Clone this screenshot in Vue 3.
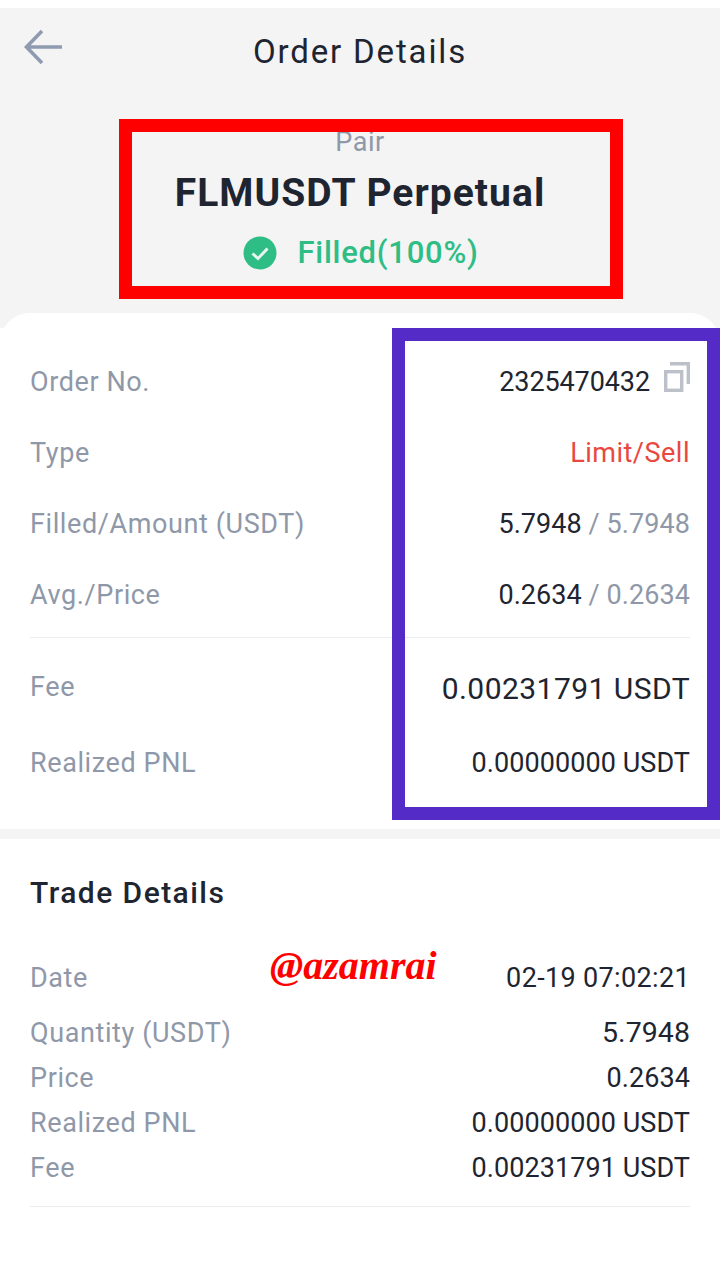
<script setup>
const orderRows = [
  { label: 'Type', value: 'Limit/Sell', cls: 'sell' },
  { label: 'Filled/Amount (USDT)', value: '5.7948', sub: '5.7948' },
  { label: 'Avg./Price', value: '0.2634', sub: '0.2634' }
]
const tradeRows = [
  { label: 'Quantity (USDT)', value: '5.7948', cls: 'mid' },
  { label: 'Price', value: '0.2634' },
  { label: 'Realized PNL', value: '0.00000000 USDT' },
  { label: 'Fee', value: '0.00231791 USDT' }
]
</script>

<template>
  <div class="page">
    <header class="top">
      <div class="nav">
        <svg class="back" width="41" height="36" viewBox="0 0 41 36" fill="none">
          <path d="M39 18H4M19 2 3.500 18 19 34" stroke="#8f9bb0" stroke-width="3.600" />
        </svg>
        <h1 class="title">Order Details</h1>
      </div>
      <div class="pair-block">
        <div class="pair-label">Pair</div>
        <div class="pair-name">FLMUSDT Perpetual</div>
        <div class="status">
          <svg width="34" height="34" viewBox="0 0 34 34">
            <circle cx="17" cy="17" r="16.500" fill="#2ebd85" />
            <path d="M9.500 17.500 15 22.500 24.500 12.500" fill="none" stroke="#e6f6ef" stroke-width="3" />
          </svg>
          <span>Filled(100%)</span>
        </div>
      </div>
      <div class="box-red"></div>
    </header>

    <section class="card">
      <div class="row">
        <span class="label">Order No.</span>
        <span class="value order-no"><span>2325470432</span><svg class="copy" width="26" height="30" viewBox="0 0 26 30" fill="none">
            <path d="M6 1.700H24.300V22" stroke="#bcc0c8" stroke-width="3.400" />
            <rect x="1.700" y="9.700" width="16" height="18.600" stroke="#bcc0c8" stroke-width="3.400" />
          </svg></span>
      </div>
      <div v-for="r in orderRows" :key="r.label" class="row">
        <span class="label">{{ r.label }}</span>
        <span class="value" :class="r.cls">{{ r.value }}<span v-if="r.sub" class="sub"> / {{ r.sub }}</span></span>
      </div>
      <div class="divider"></div>
      <div class="row fee">
        <span class="label">Fee</span>
        <span class="value big">0.00231791 USDT</span>
      </div>
      <div class="row pnl">
        <span class="label">Realized PNL</span>
        <span class="value">0.00000000 USDT</span>
      </div>
      <div class="box-purple"></div>
    </section>

    <div class="gap"></div>

    <section class="trade">
      <h2 class="trade-title">Trade Details</h2>
      <div class="trade-row date">
        <span class="label">Date</span>
        <span class="value date-value">02-19 07:02:21</span>
        <span class="mark">@azamrai</span>
      </div>
      <div v-for="r in tradeRows" :key="r.label" class="trade-row">
        <span class="label">{{ r.label }}</span>
        <span class="value" :class="r.cls">{{ r.value }}</span>
      </div>
      <div class="divider end"></div>
    </section>
  </div>
</template>

<style scoped>
.page {
  width: 720px;
  height: 1280px;
  overflow: hidden;
  padding-top: 8px;
  box-sizing: border-box;
  background: #fff;
  font-family: Roboto, "Noto Sans", sans-serif;
  color: #1e2530;
}
.top {
  position: relative;
  height: 320px;
  background: #f4f4f4;
}
.nav {
  position: relative;
  height: 87px;
  display: flex;
  justify-content: center;
  align-items: center;
}
.back {
  position: absolute;
  left: 23px;
  top: 21px;
}
.title {
  margin: 0;
  font-size: 33px;
  font-weight: 400;
  letter-spacing: 1.85px;
}
.pair-block {
  margin-top: 31px;
  display: flex;
  flex-direction: column;
  align-items: center;
}
.pair-label {
  font-size: 27px;
  line-height: 32px;
  color: #8f98a8;
  letter-spacing: 0.5px;
}
.pair-name {
  margin-top: 12px;
  font-size: 39px;
  line-height: 46px;
  font-weight: 700;
  letter-spacing: 1.05px;
}
.status {
  margin-top: 17px;
  margin-left: 2px;
  display: flex;
  align-items: center;
  gap: 20px;
  font-size: 31px;
  line-height: 40px;
  font-weight: 500;
  letter-spacing: 0.75px;
  color: #2ebd85;
}
.box-red {
  position: absolute;
  left: 119px;
  top: 111px;
  width: 504px;
  height: 180px;
  border: 13.500px solid #ff0000;
  box-sizing: border-box;
}
.card {
  position: relative;
  margin-top: -15px;
  height: 516px;
  padding: 33px 30px 0;
  box-sizing: border-box;
  background: #fff;
  border-radius: 30px 30px 0 0;
}
.row {
  height: 71px;
  display: flex;
  justify-content: space-between;
  align-items: center;
}
.label {
  font-size: 27px;
  color: #8f98a8;
  letter-spacing: 0.6px;
}
.value {
  font-size: 27px;
  color: #1e2530;
  white-space: pre;
  letter-spacing: 0.07px;
}
.sub {
  color: #8f98a8;
}
.sell {
  color: #e8483f;
  letter-spacing: 0.5px;
}
.order-no {
  display: flex;
  align-items: center;
  gap: 14px;
  letter-spacing: -0.1px;
}
.copy {
  margin-bottom: 10px;
}
.divider {
  height: 1px;
  background: #eaecef;
}
.row + .divider {
  margin-top: 7px;
}
.row.fee {
  height: 72px;
  margin-top: 14px;
}
.row.fee .label {
  margin-top: -2px;
}
.big {
  font-size: 30px;
  letter-spacing: 0.45px;
}
.row.pnl {
  height: 78px;
}
.box-purple {
  position: absolute;
  left: 392px;
  top: 15px;
  width: 328px;
  height: 492px;
  border: 13.500px solid #552bc8;
  box-sizing: border-box;
}
.gap {
  height: 10px;
  background: #f4f4f4;
}
.trade {
  padding: 36px 30px 0;
  background: #fff;
}
.trade-title {
  margin: 0;
  font-size: 30px;
  line-height: 36px;
  font-weight: 500;
  letter-spacing: 1.45px;
}
.trade-row {
  height: 45px;
  display: flex;
  justify-content: space-between;
  align-items: center;
}
.trade-row.date {
  position: relative;
  height: 55px;
  margin-top: 39px;
  margin-bottom: 5px;
}
.date-value {
  letter-spacing: 0.35px;
}
.mid {
  font-size: 28.500px;
}
.mark {
  position: absolute;
  left: 240px;
  top: -7px;
  font-family: "Liberation Serif", serif;
  font-style: italic;
  font-weight: 700;
  font-size: 40px;
  line-height: 46px;
  color: #ff0000;
}
.divider.end {
  margin-top: 16px;
}
</style>
